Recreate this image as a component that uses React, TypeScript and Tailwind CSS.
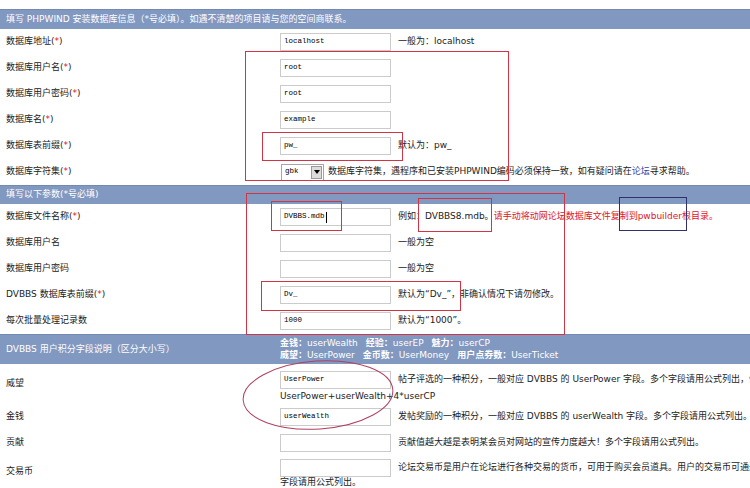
import type { ReactNode } from "react";

const TEXT = "font-['DejaVu_Sans','Noto_Sans_CJK_SC',sans-serif] text-[9px] text-[#222]";

function Req() {
  return (
    <>
      (<span className="text-[#e0141e]">*</span>)
    </>
  );
}

function Field({ value = "", caret = false }: { value?: string; caret?: boolean }) {
  return (
    <div className="flex h-[18px] w-[111px] shrink-0 items-center border border-[#cbcbcb] bg-white pl-[3px] font-['Liberation_Mono',monospace] text-[7.5px] text-black">
      {value}
      {caret && <span className="ml-[1px] h-[11px] w-px bg-black" />}
    </div>
  );
}

function Row({
  label,
  req = false,
  height = "h-[26px]",
  children,
}: {
  label: ReactNode;
  req?: boolean;
  height?: string;
  children?: ReactNode;
}) {
  return (
    <div className={`flex items-center ${height}`}>
      <div className="w-[280px] shrink-0 pl-[6px]">
        {label}
        {req && <Req />}
      </div>
      <div className="flex items-center whitespace-nowrap">{children}</div>
    </div>
  );
}

function Hint({ children }: { children: ReactNode }) {
  return <span className="ml-[7px] whitespace-nowrap">{children}</span>;
}

function Bar({ children }: { children: ReactNode }) {
  return (
    <div className="flex h-[19px] items-center border-t border-[#7489b2] bg-[#8198c1] pl-[6px] text-white">
      {children}
    </div>
  );
}

export default function App() {
  return (
    <div className={`relative h-[488px] w-[750px] overflow-hidden bg-white pt-[9px] ${TEXT}`}>
      <div className="flex h-[20px] items-center border-t border-[#7489b2] bg-[#8198c1] pl-[6px] text-white">
        填写 PHPWIND 安装数据库信息（*号必填）。如遇不清楚的项目请与您的空间商联系。
      </div>

      <Row label="数据库地址" req>
        <Field value="localhost" />
        <Hint>一般为：localhost</Hint>
      </Row>
      <Row label="数据库用户名" req>
        <Field value="root" />
      </Row>
      <Row label="数据库用户密码" req>
        <Field value="root" />
      </Row>
      <Row label="数据库名" req>
        <Field value="example" />
      </Row>
      <Row label="数据库表前缀" req>
        <Field value="pw_" />
        <Hint>默认为：pw_</Hint>
      </Row>
      <Row label="数据库字符集" req>
        <div className="ml-px flex h-[17px] w-[43px] items-center justify-between border border-[#a5a5a5] bg-white pl-[3px] font-['Liberation_Mono',monospace] text-[7.5px] text-black">
          gbk
          <span className="mr-px flex h-[13px] w-[11px] items-center justify-center border border-[#9a9a9a] bg-[#dcdcdc]">
            <span className="h-0 w-0 border-x-[3px] border-t-[4px] border-x-transparent border-t-black" />
          </span>
        </div>
        <span className="ml-[4px]">
          数据库字符集，遇程序和已安装PHPWIND编码必须保持一致，如有疑问请在
          <span className="text-[#3441a4]">论坛</span>寻求帮助。
        </span>
      </Row>

      <Bar>填写以下参数(*号必填)</Bar>

      <Row label="数据库文件名称" req>
        <Field value="DVBBS.mdb" caret />
        <Hint>
          例如：DVBBS8.mdb。
          <span className="text-[#e0141e]">请手动将动网论坛数据库文件复制到pwbuilder根目录。</span>
        </Hint>
      </Row>
      <Row label="数据库用户名">
        <Field />
        <Hint>一般为空</Hint>
      </Row>
      <Row label="数据库用户密码">
        <Field />
        <Hint>一般为空</Hint>
      </Row>
      <Row label="DVBBS 数据库表前缀" req>
        <Field value="Dv_" />
        <Hint>默认为“Dv_”，非确认情况下请勿修改。</Hint>
      </Row>
      <Row label="每次批量处理记录数">
        <Field value="1000" />
        <Hint>默认为“1000”。</Hint>
      </Row>

      {/* points field legend */}
      <div className="flex h-[30px] items-center border-t border-[#7489b2] bg-[#8198c1] text-white">
        <div className="w-[280px] shrink-0 pl-[6px]">DVBBS 用户积分字段说明（区分大小写）</div>
        <div className="flex flex-col gap-[1px] whitespace-nowrap leading-[11px]">
          <div>
            <b>金钱：</b>userWealth<span className="ml-[8px]" />
            <b>经验：</b>userEP<span className="ml-[8px]" />
            <b>魅力：</b>userCP
          </div>
          <div>
            <b>威望：</b>UserPower<span className="ml-[8px]" />
            <b>金币数：</b>UserMoney<span className="ml-[8px]" />
            <b>用户点券数：</b>UserTicket
          </div>
        </div>
      </div>

      <Row label="威望" height="h-[40px]">
        <div className="flex flex-col pt-[6px]">
          <div className="flex items-center">
            <Field value="UserPower" />
            <Hint>帖子评选的一种积分，一般对应 DVBBS 的 UserPower 字段。多个字段请用公式列出，例如：</Hint>
          </div>
          <div className="leading-[14px]">UserPower+userWealth+4*userCP</div>
        </div>
      </Row>
      <Row label="金钱">
        <Field value="userWealth" />
        <Hint>发帖奖励的一种积分，一般对应 DVBBS 的 userWealth 字段。多个字段请用公式列出。</Hint>
      </Row>
      <Row label="贡献">
        <Field />
        <Hint>贡献值越大越是表明某会员对网站的宣传力度越大！多个字段请用公式列出。</Hint>
      </Row>
      <Row label="交易币" height="h-[32px]">
        <div className="flex flex-col pt-[3px]">
          <div className="flex items-center">
            <Field />
            <Hint>论坛交易币是用户在论坛进行各种交易的货币，可用于购买会员道具。用户的交易币可通过帖子出售获得。多个</Hint>
          </div>
          <div className="leading-[11px]">字段请用公式列出。</div>
        </div>
      </Row>

      {/* hand-drawn markup on top of the form */}
      <div className="pointer-events-none absolute left-[245px] top-[51px] h-[130px] w-[264px] border border-[#cf3545]" />
      <div className="pointer-events-none absolute left-[262px] top-[132px] h-[29px] w-[141px] border border-[#cf3545]" />
      <div className="pointer-events-none absolute left-[246px] top-[193px] h-[142px] w-[319px] border border-[#cf3545]" />
      <div className="pointer-events-none absolute left-[271px] top-[201px] h-[30px] w-[71px] border border-[#cf3545]" />
      <div className="pointer-events-none absolute left-[418px] top-[198px] h-[34px] w-[74px] border border-[#cf3545]" />
      <div className="pointer-events-none absolute left-[619px] top-[197px] h-[34px] w-[68px] border border-[#2f316c]" />
      <div className="pointer-events-none absolute left-[261px] top-[281px] h-[30px] w-[200px] border border-[#cf3545]" />
      <svg className="pointer-events-none absolute left-[236px] top-[353px]" width="164" height="84" viewBox="0 0 164 84">
        <ellipse cx="82" cy="42" rx="75" ry="34" fill="none" stroke="#b0405f" strokeWidth="1" transform="rotate(-4 82 42)" />
      </svg>
    </div>
  );
}
